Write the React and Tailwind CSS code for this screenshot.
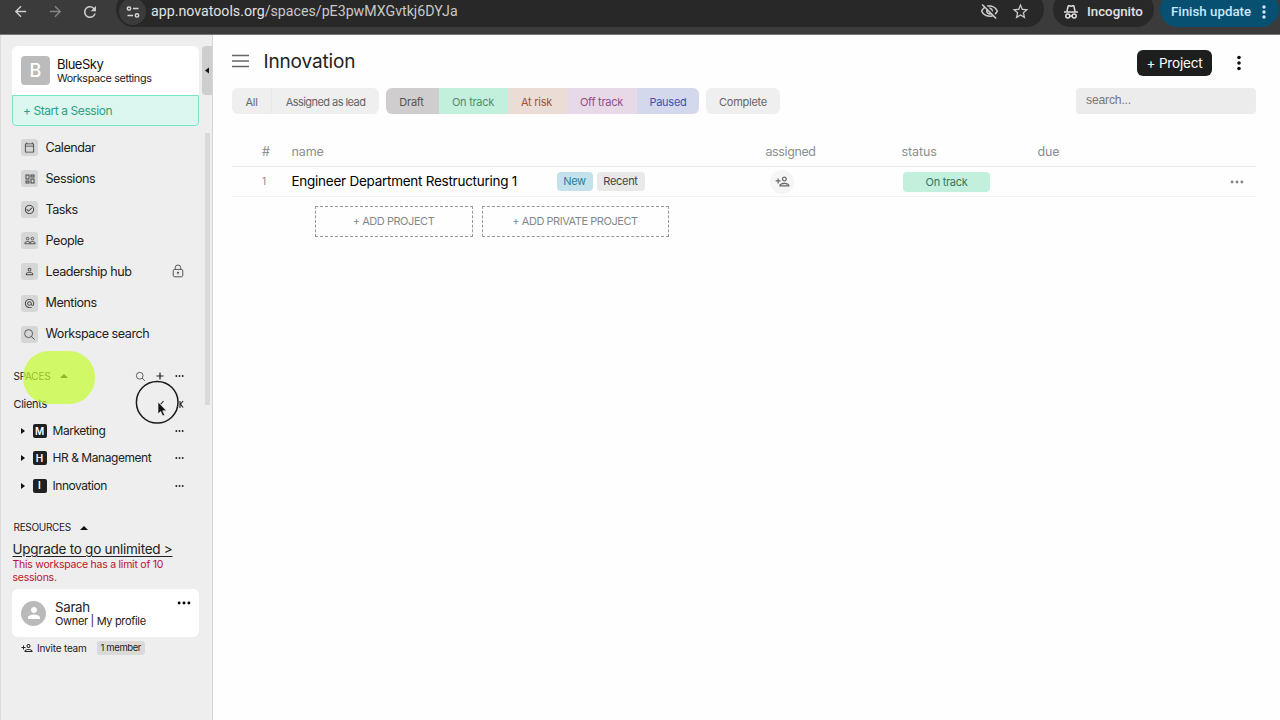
import React from 'react';
import {
    MdArrowBack,
    MdArrowForward,
    MdRefresh,
    MdOutlineVisibilityOff,
    MdStarBorder,
    MdMoreVert,
    MdOutlineCalendarToday,
    MdOutlineDashboard,
    MdCheckCircleOutline,
    MdPersonOutline,
    MdOutlinePersonAdd,
    MdPerson,
    MdAlternateEmail,
} from 'react-icons/md';
import { IoSearchOutline } from 'react-icons/io5';

const PeopleIcon = ({ className }) => (
    <svg viewBox="0 0 14 12" className={className} fill="none" stroke="currentColor" strokeWidth="1">
        <circle cx="4.2" cy="3.8" r="1.5" />
        <circle cx="9.8" cy="3.8" r="1.5" />
        <path d="M1 9.8V9q0-1.8 3.2-1.8T7 9v.8zM7 9q0-1.8 2.8-1.8T13 9v.8H7" />
    </svg>
);

const navItems = [
    { label: "Calendar", icon: MdOutlineCalendarToday, iconClass: "size-[11px]" },
    { label: "Sessions", icon: MdOutlineDashboard, iconClass: "size-3" },
    { label: "Tasks", icon: MdCheckCircleOutline, iconClass: "size-[11px]" },
    { label: "People", icon: PeopleIcon, iconClass: "h-[11px] w-3" },
    { label: "Leadership hub", icon: MdPersonOutline, iconClass: "size-[11px]", locked: true },
    { label: "Mentions", icon: MdAlternateEmail, iconClass: "size-[11px]" },
    { label: "Workspace search", icon: IoSearchOutline, iconClass: "size-[13px]" },
];

const spaces = [
    { letter: "M", name: "Marketing" },
    { letter: "H", name: "HR & Management" },
    { letter: "I", name: "Innovation" },
];

const Dots = ({ className }) => (
    <svg viewBox="0 0 16 4" className={className} fill="currentColor">
        <circle cx="2.4" cy="2" r="1.7" />
        <circle cx="8" cy="2" r="1.7" />
        <circle cx="13.6" cy="2" r="1.7" />
    </svg>
);

const TuneIcon = () => (
    <svg viewBox="0 0 14 14" className="size-[14px]" fill="none" stroke="#d5d5d5" strokeWidth="1.5">
        <circle cx="3" cy="3.6" r="1.7" />
        <path d="M7 3.6h5.5M1.5 10.4H7" />
        <circle cx="11" cy="10.4" r="1.7" />
    </svg>
);

const IncognitoIcon = () => (
    <svg viewBox="0 0 16 16" className="size-4" fill="none" stroke="#e0e0e0" strokeWidth="1.5">
        <path d="M4 7.2 5.1 2.2Q5.3 1.5 6 1.7L8 2.3 10 1.7Q10.7 1.5 10.9 2.2L12 7.2M1 8h14" />
        <circle cx="4.8" cy="12" r="2" />
        <circle cx="11.2" cy="12" r="2" />
        <path d="M6.8 12h2.4" />
    </svg>
);

const LockIcon = () => (
    <svg viewBox="0 0 12 14" className="mt-[-2px] h-[14px] w-3" fill="none" stroke="#555" strokeWidth="1">
        <rect x="1.2" y="5.4" width="9.6" height="7.4" rx="1.6" />
        <path d="M3.2 5.4V3.8a2.8 2.8 0 0 1 5.6 0v1.6M6 8.4v2" />
        <circle cx="6" cy="8.5" r=".6" fill="#555" />
    </svg>
);

const BrowserBar = () => (
    <div className="flex h-[35px] shrink-0 items-start overflow-hidden border-b border-[#777] bg-[#3b3b3b] font-[Roboto,sans-serif] text-[#e3e3e3]">
        <div className="flex h-[23px] w-[116px] shrink-0 items-center pl-3">
            <MdArrowBack className="size-[17px] text-[#cfcfcf]" />
            <MdArrowForward className="ml-[18px] size-[17px] text-[#858585]" />
            <MdRefresh className="ml-[17px] size-[18px] text-[#cfcfcf]" />
        </div>
        <div className="-mt-2 flex h-[35px] w-[928px] shrink-0 items-center rounded-full bg-[#282828] pr-[14px] pl-[3px] pt-1">
            <div className="flex size-[27px] items-center justify-center rounded-full bg-[#3b3b3b]">
                <TuneIcon />
            </div>
            <div className="ml-[5px] text-[14.2px]">
                app.novatools.org<span className="text-[#c9c9c9]">/spaces/pE3pwMXGvtkj6DYJa</span>
            </div>
            <MdOutlineVisibilityOff className="ml-auto size-[19px] text-[#c9c9c9]" />
            <MdStarBorder className="ml-3 size-[19px] text-[#c9c9c9]" />
        </div>
        <div className="-mt-2 ml-[9px] flex h-[35px] w-[101px] shrink-0 items-center rounded-full bg-[#282828] pl-[10px] pt-1">
            <IncognitoIcon />
            <span className="ml-2 text-[13.3px] font-medium">Incognito</span>
        </div>
        <div className="-mt-2 ml-[6px] flex h-[35px] w-[119px] shrink-0 items-center rounded-full bg-[#075071] pl-[11px] pt-1 text-[#c9e9fa]">
            <span className="w-[80px] text-[13.3px] font-medium whitespace-nowrap">Finish update</span>
            <MdMoreVert className="ml-[3px] size-5" />
        </div>
    </div>
);

const SpaceRow = ({ letter, name }) => (
    <div className="flex h-[27.2px] items-center pr-[15px] pl-[8.5px]">
        <svg viewBox="0 0 4 6" className="h-1.5 w-1 shrink-0" fill="#111">
            <path d="M0 0 4 3 0 6z" />
        </svg>
        <span className="ml-2 flex size-[14px] items-center justify-center rounded-[2px] bg-[#202020] text-[10px] font-semibold text-white">
            {letter}
        </span>
        <span className="ml-1.5 text-[12px] tracking-[-0.45px]">{name}</span>
        <Dots className="ml-auto h-2 w-[9px]" />
    </div>
);

const Sidebar = () => (
    <aside className="relative w-[213px] shrink-0 border-r border-l border-r-[#d6d6d6] border-l-[#dcdcdc] bg-[#eeeeee] pt-[11px] pr-[13px] pl-[11px] text-[#222]">
        <div className="flex h-[49px] items-center rounded-t-md bg-white pl-[9px]">
            <div className="flex size-[29px] items-center justify-center rounded bg-[#bbb] text-[18px] font-medium text-white">
                B
            </div>
            <div className="ml-[7px] pt-px">
                <div className="text-[13px] leading-[15px] tracking-[-0.5px] text-[#111]">BlueSky</div>
                <div className="text-[10.8px] leading-[13px] tracking-[-0.35px]">Workspace settings</div>
            </div>
        </div>
        <div className="flex h-[31px] items-center rounded-b border-[1.5px] border-[#7be5ca] bg-[#dcf7f0] pl-[10px] text-[12px] tracking-[-0.43px] text-[#2f9f80]">
            + Start a Session
        </div>
        <nav className="mt-1.5">
            {navItems.map(({ label, icon: Icon, iconClass, locked }) => (
                <div key={label} className="flex h-[31.1px] items-center pr-[15px] pl-[9px]">
                    <span className="flex size-[17px] items-center justify-center rounded-[3px] bg-[#d5d7d7] text-[#444]">
                        <Icon className={iconClass} />
                    </span>
                    <span className="ml-[7.5px] pt-px text-[12.6px] tracking-[-0.47px]">{label}</span>
                    {locked && <span className="ml-auto"><LockIcon /></span>}
                </div>
            ))}
        </nav>

        <div className="mt-[13px] flex h-[27px] items-center pr-[15px] pl-[1.5px]">
            <span className="text-[10px] tracking-[-0.25px]">SPACES</span>
            <svg viewBox="0 0 8 4" className="ml-2.5 h-1 w-2" fill="#111">
                <path d="M0 4 4 0 8 4z" />
            </svg>
            <IoSearchOutline className="ml-auto size-[11px]" />
            <svg viewBox="0 0 8 8" className="ml-2.5 size-2" stroke="#222" strokeWidth="1.2">
                <path d="M4 0.5v7M.5 4h7" />
            </svg>
            <Dots className="ml-[11px] h-2 w-[9px]" />
        </div>
        <div className="mt-px flex h-[27px] items-center justify-between pr-[15px] pl-[1.5px]">
            <span className="text-[11px] tracking-[-0.3px]">Clients</span>
            <svg viewBox="0 0 26 8" className="h-2 w-[26px]" fill="none" stroke="#222" strokeWidth="1.1">
                <path d="M5.5 1 2 5M22 1v7M25.2 1 22.4 4.2 25.2 7.5" />
            </svg>
        </div>
        {spaces.map((space) => <SpaceRow key={space.name} {...space} />)}

        <div className="mt-[16px] flex h-[20px] items-center pl-[1.5px] pt-[5px]">
            <span className="text-[10px] tracking-[-0.3px]">RESOURCES</span>
            <svg viewBox="0 0 8 4" className="ml-[9px] h-1 w-2" fill="#111">
                <path d="M0 4 4 0 8 4z" />
            </svg>
        </div>
        <div className="mt-1 pl-[0.5px]">
            <div className="text-[13.5px] leading-[20px] tracking-[-0.25px] underline underline-offset-2">Upgrade to go unlimited &gt;</div>
            <p className="mt-[-1px] text-[10.5px] leading-[13px] tracking-[-0.24px] text-[#c01030]">
                This workspace has a limit of 10<br />sessions.
            </p>
        </div>
        <div className="mt-[5px] flex h-[48px] items-center rounded-md bg-white pl-[9px]">
            <span className="flex size-[25px] items-center justify-center rounded-full bg-[#bababa] text-white">
                <MdPerson className="size-[18px]" />
            </span>
            <div className="ml-[9px] pt-px">
                <div className="text-[13.3px] leading-[16px] tracking-[-0.3px]">Sarah</div>
                <div className="text-[11px] leading-[13px] tracking-[-0.33px]">Owner | My profile</div>
            </div>
            <Dots className="mt-[-20px] mr-2 ml-auto h-[18px] w-[14px] text-black" />
        </div>
        <div className="flex h-[22px] items-center pl-[9px]">
            <MdOutlinePersonAdd className="size-3" />
            <span className="ml-1 text-[10px] tracking-[-0.2px]">Invite team</span>
            <span className="ml-2.5 rounded-[3px] bg-[#dadada] px-1 text-[9.5px] leading-[14px] tracking-[-0.4px]">1 member</span>
        </div>

        {/* collapse handle and scrollbar */}
        <div className="absolute top-[11px] right-0 flex h-[49px] w-2.5 items-center justify-center rounded-l bg-[#cdcfcf]">
            <svg viewBox="0 0 4 6" className="h-[7px] w-1" fill="#111">
                <path d="M4 0 0 3 4 6z" />
            </svg>
        </div>
        <div className="absolute top-[98px] right-0.5 h-[272px] w-[5px] bg-[#dadada]" />
    </aside>
);

const Main = () => (
    <main className="flex-1 bg-[#fefefe] pr-6 pl-[19px]">
        <header className="flex h-[53px] items-center pt-[3px]">
            <svg viewBox="0 0 17 14" className="mt-[-5px] h-[14px] w-[17px]" stroke="#666" strokeWidth="1.3">
                <path d="M0 1.5h17M0 7h17M0 12.5h17" />
            </svg>
            <h1 className="mt-[-2px] ml-[14.5px] text-[19px] tracking-[-0.15px] text-[#222]">Innovation</h1>
            <button className="ml-auto h-[26px] w-[75px] rounded-md bg-[#1d1f1f] pt-px text-[13.5px] tracking-[-0.2px] text-white">+ Project</button>
            <svg viewBox="0 0 4 16" className="mr-[15px] ml-[25px] h-4 w-1" fill="#111">
                <circle cx="2" cy="2.5" r="1.8" />
                <circle cx="2" cy="8" r="1.8" />
                <circle cx="2" cy="13.5" r="1.8" />
            </svg>
        </header>
        <div className="flex h-[26px] items-center text-[11px] tracking-[-0.25px] text-[#666]">
            <div className="flex h-[26px] overflow-hidden rounded-md bg-[#efefef] leading-[28px]">
                <span className="w-10 border-r border-[#e9e9e9] text-center">All</span>
                <span className="w-[107px] text-center tracking-[-0.55px]">Assigned as lead</span>
            </div>
            <div className="ml-[7px] flex h-[26px] overflow-hidden rounded-md text-center leading-[28px]">
                <span className="w-[53px] bg-[#d0cdce] pr-0.5 text-[#555]">Draft</span>
                <span className="w-[69px] bg-[#c3f0dd] pr-px text-[#4f8c74]">On track</span>
                <span className="w-[59px] bg-[#ebdcd6] pr-0.5 text-[#a0523f]">At risk</span>
                <span className="w-[70px] bg-[#e8d9e8] pr-px text-[#8c5287]">Off track</span>
                <span className="w-[62px] bg-[#d3d8ec] text-[#3f4fb5]">Paused</span>
            </div>
            <span className="ml-[7px] h-[26px] w-[74px] rounded-md bg-[#efefef] text-center leading-[28px]">Complete</span>
            <div className="ml-auto h-[26px] w-[180px] rounded bg-[#ececec] pl-[10px] font-['Liberation_Sans',sans-serif] text-[12.2px] leading-[25px] tracking-[-0.2px] text-[#777]">search...</div>
        </div>

        <div className="mt-[22px] grid h-[31px] grid-cols-[59.5px_474px_136px_136px_1fr] items-center border-b border-[#eaeaea] pt-0.5 text-[12.5px] tracking-[-0.1px] text-[#8b8f8f]">
            <span className="pl-[30px]">#</span>
            <span>name</span>
            <span className="tracking-[-0.4px]">assigned</span>
            <span>status</span>
            <span>due</span>
        </div>
        <div className="grid h-[30px] grid-cols-[59.5px_474.5px_136px_136px_1fr] items-center border-b border-[#f2f2f2]">
            <span className="pl-[30px] text-[10px] text-[#888]">1</span>
            <div className="flex items-center text-[11px] tracking-[-0.3px]">
                <span className="w-[265px] text-[13.5px] tracking-[-0.26px] text-black">Engineer Department Restructuring 1</span>
                <span className="h-[19px] w-9 rounded bg-[#c3e2eb] text-center leading-[19px] text-[#2d7d99]">New</span>
                <span className="ml-1 h-[19px] w-12 rounded bg-[#e9e9e9] text-center leading-[19px] text-[#444]">Recent</span>
            </div>
            <span className="ml-[4px] flex size-6 items-center justify-center rounded-full bg-[#f5f5f5] text-[#666]">
                <MdOutlinePersonAdd className="size-[15px]" />
            </span>
            <span className="ml-px h-5 w-[87px] rounded bg-[#c3f0dd] text-center text-[11px] leading-5 tracking-[-0.3px] text-[#38745d]">On track</span>
            <Dots className="mr-[12px] ml-auto h-2 w-[14px] text-[#888]" />
        </div>
        <div className="mt-[9px] ml-[82.5px] flex gap-[9px] text-[11px] tracking-[-0.45px] text-[#858989]">
            <button className="h-[31px] w-[158px] border border-dashed border-[#969a9a]">+ ADD PROJECT</button>
            <button className="h-[31px] w-[187px] border border-dashed border-[#969a9a]">+ ADD PRIVATE PROJECT</button>
        </div>
    </main>
);

const App = () => (
    <div className="relative flex h-[720px] w-[1280px] flex-col overflow-hidden font-[Inter,sans-serif]">
        <BrowserBar />
        <div className="flex min-h-0 flex-1">
            <Sidebar />
            <Main />
        </div>

        {/* click highlight and pointer */}
        <div className="absolute top-[351px] left-[23px] h-[53px] w-[72px] rounded-[26px] bg-[#c5fc2c]/70" />
        <svg viewBox="0 0 44 44" className="absolute top-[380px] left-[135px] size-11" fill="none" stroke="#1a1a1a" strokeWidth="1.5">
            <circle cx="22.2" cy="22.2" r="20.8" />
        </svg>
        <svg viewBox="0 0 10 16" className="absolute top-[401px] left-[157px] h-4 w-2.5" fill="#111" stroke="#eee" strokeWidth=".7">
            <path d="M1 1v12l2.7-2.5 2 4.5 2-.9-2-4.3H9.5z" />
        </svg>
    </div>
);

export default App;
